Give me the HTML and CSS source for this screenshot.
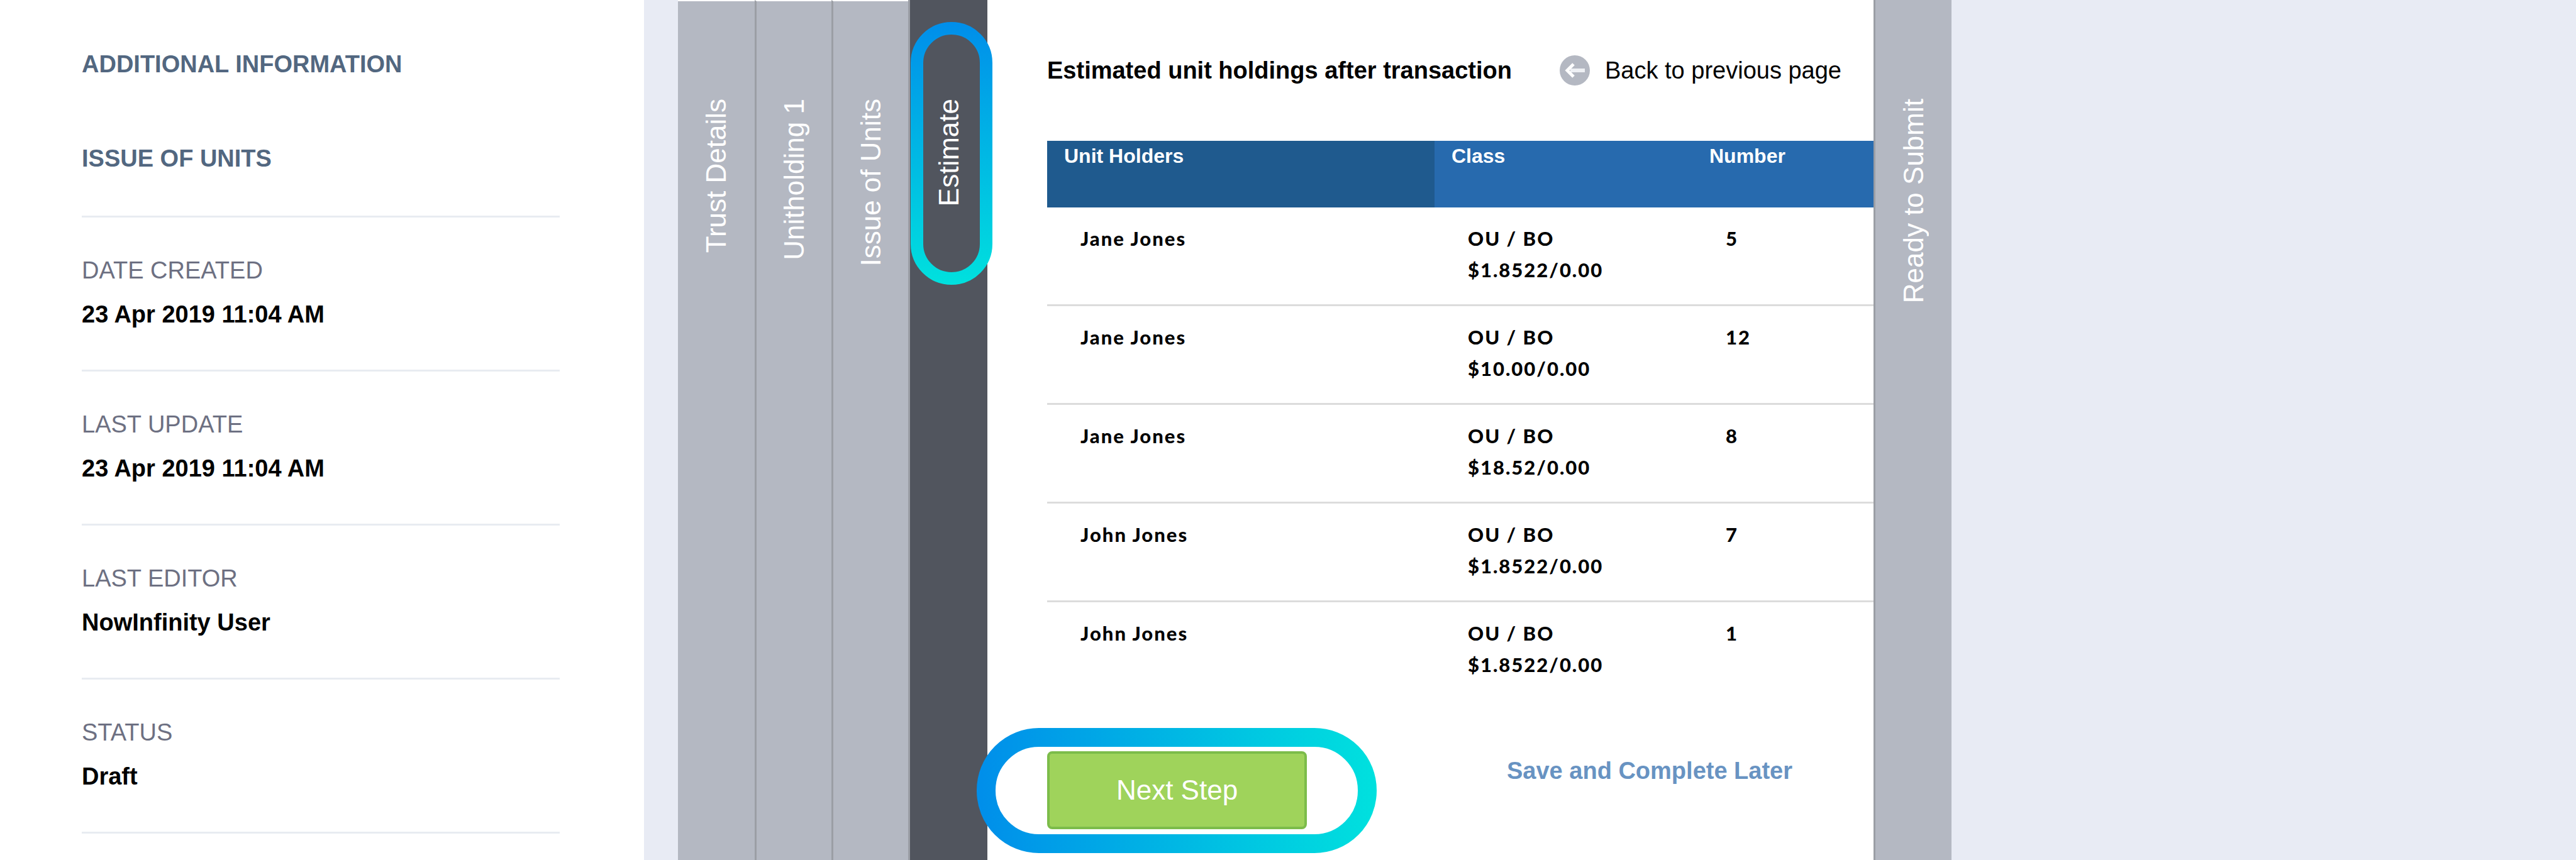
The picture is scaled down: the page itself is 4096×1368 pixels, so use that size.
FILE: index.html
```html
<!DOCTYPE html>
<html lang="en">
<head>
  <meta charset="UTF-8" />
  <meta name="viewport" content="width=device-width, initial-scale=1.0" />
  <title>Issue of Units</title>
  <link rel="stylesheet" href="styles.css">
</head>
<body>
  <div class="layout">
    <aside class="sidebar">
      <h2>Additional Information</h2>
      <h3>Issue of Units</h3>
      <dl class="info-list">
        <div class="info">
          <dt>Date Created</dt>
          <dd>23 Apr 2019 11:04 AM</dd>
        </div>
        <div class="info">
          <dt>Last Update</dt>
          <dd>23 Apr 2019 11:04 AM</dd>
        </div>
        <div class="info">
          <dt>Last Editor</dt>
          <dd>NowInfinity User</dd>
        </div>
        <div class="info">
          <dt>Status</dt>
          <dd>Draft</dd>
        </div>
      </dl>
    </aside>

    <main class="wizard">
      <button class="tab"><span>Trust Details</span></button>
      <button class="tab"><span>Unitholding 1</span></button>
      <button class="tab"><span>Issue of Units</span></button>
      <button class="tab active">
        <span>Estimate</span>
        <svg class="ring ring-tab" viewBox="0 0 130 418" aria-hidden="true">
          <defs>
            <linearGradient id="ringDown" gradientUnits="userSpaceOnUse" x1="0" y1="0" x2="0" y2="418">
              <stop offset="0" stop-color="#008eea" />
              <stop offset="1" stop-color="#00e1de" />
            </linearGradient>
          </defs>
          <rect x="10" y="10" width="110" height="398" rx="55" fill="none" stroke="url(#ringDown)" stroke-width="20" />
        </svg>
      </button>

      <section class="panel">
        <header class="panel-head">
          <h1>Estimated unit holdings after transaction</h1>
          <a class="back" href="#">
            <svg class="back-icon" viewBox="0 0 48 48" aria-hidden="true">
              <circle cx="24" cy="24" r="24" fill="#b4b8c2" />
              <path d="M17 24H40" stroke="#eef0f4" stroke-width="6" fill="none" />
              <path d="M22 14L12 24L22 34" stroke="#fff" stroke-width="5" fill="none" />
            </svg>
            Back to previous page
          </a>
        </header>

        <table class="holdings">
          <thead>
            <tr>
              <th class="col-holder">Unit Holders</th>
              <th class="col-class">Class</th>
              <th>Number</th>
            </tr>
          </thead>
          <tbody>
            <tr>
              <td>Jane Jones</td>
              <td>OU / BO<br>$1.8522/0.00</td>
              <td>5</td>
            </tr>
            <tr>
              <td>Jane Jones</td>
              <td>OU / BO<br>$10.00/0.00</td>
              <td>12</td>
            </tr>
            <tr>
              <td>Jane Jones</td>
              <td>OU / BO<br>$18.52/0.00</td>
              <td>8</td>
            </tr>
            <tr>
              <td>John Jones</td>
              <td>OU / BO<br>$1.8522/0.00</td>
              <td>7</td>
            </tr>
            <tr>
              <td>John Jones</td>
              <td>OU / BO<br>$1.8522/0.00</td>
              <td>1</td>
            </tr>
          </tbody>
        </table>

        <div class="actions">
          <div class="next-wrap">
            <button class="next">Next Step</button>
            <svg class="ring ring-next" viewBox="0 0 636 199" aria-hidden="true">
              <defs>
                <linearGradient id="ringAcross" gradientUnits="userSpaceOnUse" x1="0" y1="0" x2="636" y2="0">
                  <stop offset="0" stop-color="#008eea" />
                  <stop offset="1" stop-color="#00e1de" />
                </linearGradient>
              </defs>
              <rect x="15" y="15" width="606" height="169" rx="84" fill="none" stroke="url(#ringAcross)" stroke-width="30" />
            </svg>
          </div>
          <a class="save" href="#">Save and Complete Later</a>
        </div>
      </section>

      <button class="tab last"><span>Ready to Submit</span></button>
    </main>
  </div>
</body>
</html>
```
FILE: styles.css
```css
* {
  box-sizing: border-box;
}
body {
  margin: 0;
  font-family: "Liberation Sans", Arial, sans-serif;
  font-size: 38px;
  line-height: 50px;
  color: #000;
  background: #e8ebf4;
}
h1, h2, h3, dl, dt, dd {
  margin: 0;
  font-size: 38px;
}
a {
  text-decoration: none;
}
button {
  font-family: inherit;
  cursor: pointer;
}
.layout {
  display: flex;
  min-height: 100vh;
}

/* left column */
.sidebar {
  width: 25%;
  padding: 77px 134px 0 130px;
  background: #fff;
}
.sidebar h2,
.sidebar h3 {
  color: #526780;
  text-transform: uppercase;
}
.sidebar h3 {
  margin-top: 100px;
}
.info-list {
  margin-top: 66px;
  border-bottom: 3px solid #e8ecf1;
}
.info {
  height: 245px;
  padding-top: 59px;
  border-top: 3px solid #e8ecf1;
}
.info dt {
  color: #6d7082;
  text-transform: uppercase;
}
.info dd {
  margin-top: 20px;
  font-weight: bold;
}

/* steps */
.wizard {
  display: flex;
  flex: 1;
  padding-left: 54px;
}
.tab {
  position: relative;
  display: flex;
  flex: none;
  align-items: flex-start;
  justify-content: center;
  width: 122px;
  padding: 155px 0 0;
  border: 0;
  border-top: 2px solid #fff;
  background: #b4b8c2;
  color: #fff;
  font-size: 44px;
  line-height: 50px;
}
.tab + .tab,
.tab.last {
  border-left: 3px solid #9b9ea5;
}
.tab span {
  writing-mode: vertical-rl;
  transform: rotate(180deg);
  white-space: nowrap;
}
.tab.active {
  width: 126px;
  padding-top: 157px;
  border-top: 0;
  background: #51555e;
}
.tab.last {
  width: 124px;
  padding-top: 157px;
  border-top: 0;
}

/* highlight rings */
.ring {
  position: absolute;
  z-index: 1;
  pointer-events: none;
}
.ring-tab {
  top: 35px;
  left: 1px;
  width: 130px;
  height: 418px;
}
.ring-next {
  top: -37px;
  left: -112px;
  width: 636px;
  height: 199px;
}

/* current step */
.panel {
  flex: none;
  width: 1409px;
  padding: 87px 0 0 95px;
  background: #fff;
}
.panel-head {
  display: flex;
  align-items: center;
  gap: 76px;
}
.back {
  display: flex;
  align-items: center;
  gap: 24px;
  color: #000;
}
.back-icon {
  width: 48px;
  height: 48px;
}
.holdings {
  width: 100%;
  margin-top: 87px;
  border-collapse: separate;
  border-spacing: 0;
  table-layout: fixed;
}
.holdings th {
  height: 106px;
  padding: 0 27px;
  background: #276aae;
  color: #fff;
  font-size: 32px;
  line-height: 48px;
  text-align: left;
  vertical-align: top;
}
.holdings .col-holder {
  width: 616px;
  background: #1f5a8e;
}
.holdings .col-class {
  width: 410px;
}
.holdings td {
  height: 157px;
  padding: 24px 53px 0;
  border-bottom: 3px solid #dcdcdc;
  font-family: Lato, sans-serif;
  font-size: 31px;
  font-weight: 900;
  letter-spacing: 2px;
  vertical-align: top;
}
.holdings tr:last-child td {
  border-bottom: 0;
}
.actions {
  display: flex;
  align-items: flex-start;
  margin-top: 80px;
}
.next-wrap {
  position: relative;
}
.next {
  display: block;
  width: 413px;
  height: 124px;
  padding: 0;
  border: 4px solid #7cbc4a;
  border-radius: 8px;
  background: #9fd35b;
  color: #fff;
  font-size: 44px;
}
.save {
  margin: 6px 0 0 318px;
  color: #6893c2;
  font-weight: bold;
}
```
